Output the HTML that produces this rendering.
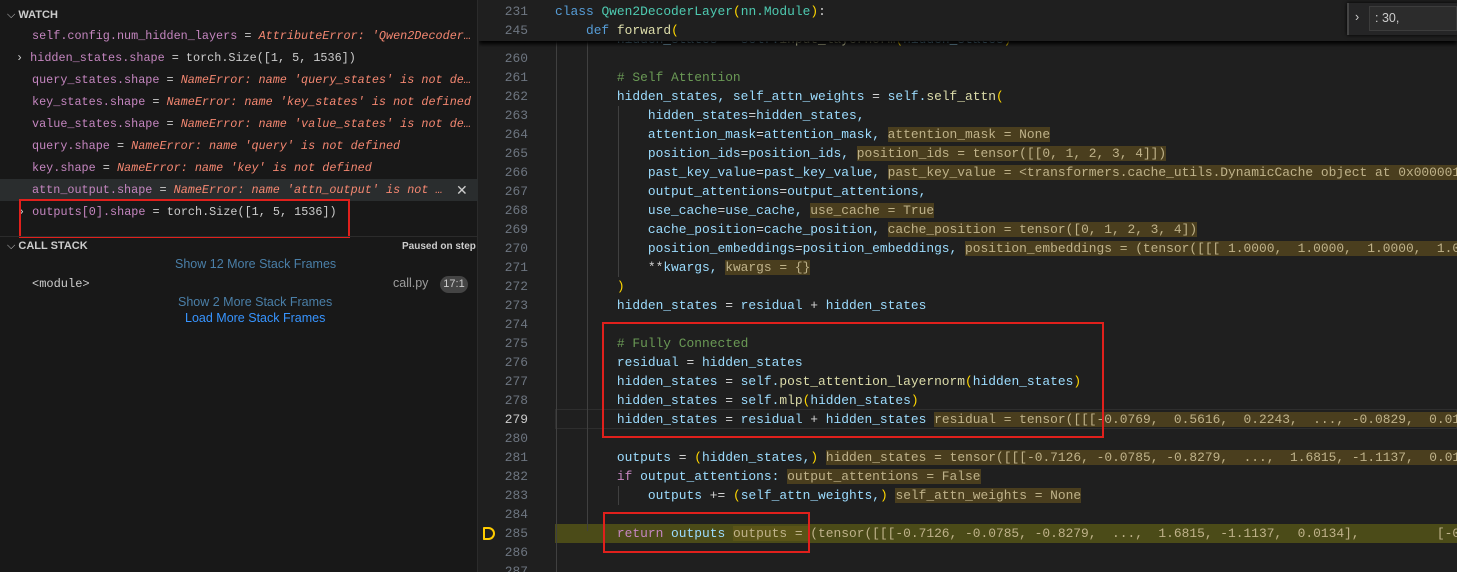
<!DOCTYPE html>
<html><head><meta charset="utf-8"><style>
*{margin:0;padding:0;box-sizing:border-box}
body{width:1457px;height:572px;overflow:hidden;background:#1f1f1f;position:relative;font-family:"Liberation Mono",monospace}
#side{position:absolute;left:0;top:0;width:478px;height:572px;background:#181818;border-right:1px solid #2b2b2b}
.r{position:absolute;left:32px;font-size:11.8px;white-space:nowrap;color:#cccccc;height:22px;line-height:22px}
.v{color:#c586c0}.e{color:#f48771;font-style:italic}.n{color:#cccccc}
.h{position:absolute;font-family:"Liberation Sans",sans-serif;font-weight:bold;font-size:11px;color:#cccccc}
.s{position:absolute;font-family:"Liberation Sans",sans-serif;font-size:12.5px;white-space:nowrap}
#ed{position:absolute;left:479px;top:0;width:978px;height:572px;overflow:hidden}
.l{position:absolute;left:76px;font-size:12.9px;white-space:pre;height:19px;line-height:19px;color:#9cdcfe}
.ln{position:absolute;left:0;width:49px;text-align:right;font-size:12.9px;color:#6e7681;height:19px;line-height:19px}
.k{color:#569cd6}.c{color:#4ec9b0}.f{color:#dcdcaa}.b{color:#ffd700}.cm{color:#6a9955}.p{color:#c586c0}.w{color:#d4d4d4}
.iv{background:#4a3e1e;color:#bfb28a}
.g{position:absolute;width:1px;background:#404040}
.box{position:absolute;border:2px solid #e0201c}
</style></head><body>
<div id="side">
<div class="h" style="left:7px;top:9px"><span style="font-weight:normal;color:#ccc">⌵</span> WATCH</div>
<div class="r" style="top:25px"><span class="v">self.config.num_hidden_layers</span> = <span class="e">AttributeError: 'Qwen2Decoder…</span></div>
<div class="r" style="top:47px;left:16px">›&nbsp;<span class="v">hidden_states.shape</span> = torch.Size([1, 5, 1536])</div>
<div class="r" style="top:69px"><span class="v">query_states.shape</span> = <span class="e">NameError: name 'query_states' is not de…</span></div>
<div class="r" style="top:91px"><span class="v">key_states.shape</span> = <span class="e">NameError: name 'key_states' is not defined</span></div>
<div class="r" style="top:113px"><span class="v">value_states.shape</span> = <span class="e">NameError: name 'value_states' is not de…</span></div>
<div class="r" style="top:135px"><span class="v">query.shape</span> = <span class="e">NameError: name 'query' is not defined</span></div>
<div class="r" style="top:157px"><span class="v">key.shape</span> = <span class="e">NameError: name 'key' is not defined</span></div>
<div style="position:absolute;left:0;top:179px;width:478px;height:22px;background:#2a2d2e"></div>
<div class="r" style="top:179px"><span class="v">attn_output.shape</span> = <span class="e">NameError: name 'attn_output' is not …</span></div>
<div class="s" style="left:456px;top:182px;color:#ccc;font-size:14px">✕</div>
<div class="r" style="top:201px;left:18px">›&nbsp;<span class="v">outputs[0].shape</span> = torch.Size([1, 5, 1536])</div>
<div class="box" style="left:19px;top:199px;width:331px;height:39px"></div>
<div style="position:absolute;left:0;top:236px;width:478px;height:1px;background:#2b2b2b"></div>
<div class="h" style="left:7px;top:240px"><span style="font-weight:normal">⌵</span> CALL STACK</div>
<div class="h" style="left:402px;top:241px;font-size:10px">Paused on step</div>
<div class="s" style="left:175px;top:257px;color:#4a7fa8">Show 12 More Stack Frames</div>
<div class="r" style="top:273px;font-size:12px">&lt;module&gt;</div>
<div class="s" style="left:393px;top:276px;color:#9d9d9d">call.py</div>
<div class="s" style="left:440px;top:276px;width:28px;height:17px;line-height:17px;border-radius:9px;background:#444;color:#ccc;font-size:11px;text-align:center">17:1</div>
<div class="s" style="left:178px;top:295px;color:#4a7fa8">Show 2 More Stack Frames</div>
<div class="s" style="left:185px;top:311px;color:#3794ff">Load More Stack Frames</div>
</div>

<div id="ed">
<div style="position:absolute;left:76px;top:524px;width:902px;height:19px;background:#4b4b18"></div>
<div style="position:absolute;left:76px;top:409px;width:902px;height:20px;border:1px solid #2e2e2e"></div>
<div class="g" style="left:77px;top:41px;height:531px"></div>
<div class="g" style="left:108px;top:41px;height:490px"></div>
<div class="g" style="left:139px;top:106px;height:171px"></div>
<div class="g" style="left:139px;top:486px;height:19px"></div>

<div class="l" style="top:30px">        hidden_states <span class="w">=</span> self.<span class="f">input_layernorm</span><span class="b">(</span>hidden_states<span class="b">)</span></div>
<div class="ln" style="top:49px">260</div>
<div class="ln" style="top:68px">261</div><div class="l" style="top:68px">        <span class="cm"># Self Attention</span></div>
<div class="ln" style="top:87px">262</div><div class="l" style="top:87px">        hidden_states, self_attn_weights <span class="w">=</span> self.<span class="f">self_attn</span><span class="b">(</span></div>
<div class="ln" style="top:106px">263</div><div class="l" style="top:106px">            hidden_states<span class="w">=</span>hidden_states,</div>
<div class="ln" style="top:125px">264</div><div class="l" style="top:125px">            attention_mask<span class="w">=</span>attention_mask, <span class="iv">attention_mask = None</span></div>
<div class="ln" style="top:144px">265</div><div class="l" style="top:144px">            position_ids<span class="w">=</span>position_ids, <span class="iv">position_ids = tensor([[0, 1, 2, 3, 4]])</span></div>
<div class="ln" style="top:163px">266</div><div class="l" style="top:163px">            past_key_value<span class="w">=</span>past_key_value, <span class="iv">past_key_value = &lt;transformers.cache_utils.DynamicCache object at 0x000001A2B3C4D5E6&gt;</span></div>
<div class="ln" style="top:182px">267</div><div class="l" style="top:182px">            output_attentions<span class="w">=</span>output_attentions,</div>
<div class="ln" style="top:201px">268</div><div class="l" style="top:201px">            use_cache<span class="w">=</span>use_cache, <span class="iv">use_cache = True</span></div>
<div class="ln" style="top:220px">269</div><div class="l" style="top:220px">            cache_position<span class="w">=</span>cache_position, <span class="iv">cache_position = tensor([0, 1, 2, 3, 4])</span></div>
<div class="ln" style="top:239px">270</div><div class="l" style="top:239px">            position_embeddings<span class="w">=</span>position_embeddings, <span class="iv">position_embeddings = (tensor([[[ 1.0000,  1.0000,  1.0000,  1.0000,  1.0000</span></div>
<div class="ln" style="top:258px">271</div><div class="l" style="top:258px">            <span class="w">**</span>kwargs, <span class="iv">kwargs = {}</span></div>
<div class="ln" style="top:277px">272</div><div class="l" style="top:277px">        <span class="b">)</span></div>
<div class="ln" style="top:296px">273</div><div class="l" style="top:296px">        hidden_states <span class="w">=</span> residual <span class="w">+</span> hidden_states</div>
<div class="ln" style="top:315px">274</div>
<div class="ln" style="top:334px">275</div><div class="l" style="top:334px">        <span class="cm"># Fully Connected</span></div>
<div class="ln" style="top:353px">276</div><div class="l" style="top:353px">        residual <span class="w">=</span> hidden_states</div>
<div class="ln" style="top:372px">277</div><div class="l" style="top:372px">        hidden_states <span class="w">=</span> self.<span class="f">post_attention_layernorm</span><span class="b">(</span>hidden_states<span class="b">)</span></div>
<div class="ln" style="top:391px">278</div><div class="l" style="top:391px">        hidden_states <span class="w">=</span> self.<span class="f">mlp</span><span class="b">(</span>hidden_states<span class="b">)</span></div>
<div class="ln" style="top:410px;color:#cccccc">279</div><div class="l" style="top:410px">        hidden_states <span class="w">=</span> residual <span class="w">+</span> hidden_states <span class="iv">residual = tensor([[[-0.0769,  0.5616,  0.2243,  ..., -0.0829,  0.0177,  0.1234</span></div>
<div class="ln" style="top:429px">280</div>
<div class="ln" style="top:448px">281</div><div class="l" style="top:448px">        outputs <span class="w">=</span> <span class="b">(</span>hidden_states,<span class="b">)</span> <span class="iv">hidden_states = tensor([[[-0.7126, -0.0785, -0.8279,  ...,  1.6815, -1.1137,  0.0134</span></div>
<div class="ln" style="top:467px">282</div><div class="l" style="top:467px">        <span class="p">if</span> output_attentions: <span class="iv">output_attentions = False</span></div>
<div class="ln" style="top:486px">283</div><div class="l" style="top:486px">            outputs <span class="w">+=</span> <span class="b">(</span>self_attn_weights,<span class="b">)</span> <span class="iv">self_attn_weights = None</span></div>
<div class="ln" style="top:505px">284</div>
<div class="ln" style="top:524px">285</div><div class="l" style="top:524px">        <span class="p">return</span> outputs <span style="background:#5a5418;color:#bfb28a">outputs = </span><span style="color:#bfb28a">(tensor([[[-0.7126, -0.0785, -0.8279,  ...,  1.6815, -1.1137,  0.0134],          [-0.1234</span></div>
<div class="ln" style="top:543px">286</div>
<div class="ln" style="top:562px">287</div>
<div style="position:absolute;left:4px;top:527px;width:12px;height:13px;border:2px solid #ffcc00;border-radius:1px 7px 7px 1px"></div>

<div style="position:absolute;left:0;top:0;width:978px;height:41px;background:#1f1f1f;box-shadow:0 3px 4px #000"></div>
<div class="ln" style="top:2px">231</div><div class="l" style="top:2px;color:#d4d4d4"><span class="k">class</span> <span class="c">Qwen2DecoderLayer</span><span class="b">(</span><span class="c">nn.Module</span><span class="b">)</span>:</div>
<div class="ln" style="top:21px">245</div><div class="l" style="top:21px">    <span class="k">def</span> <span class="f">forward</span><span class="b">(</span></div>
<div style="position:absolute;left:868px;top:3px;width:110px;height:32px;background:#252526;border-left:2px solid #444;box-shadow:0 0 4px #000"></div>
<div class="s" style="left:876px;top:10px;color:#ccc">›</div>
<div style="position:absolute;left:890px;top:6px;width:88px;height:25px;background:#2c2c2c;border:1px solid #3c3c3c;font-family:'Liberation Sans',sans-serif;font-size:12.5px;color:#ccc;line-height:23px;padding-left:5px">: 30,</div>
</div>
<div class="box" style="left:602px;top:322px;width:502px;height:116px"></div>
<div class="box" style="left:603px;top:512px;width:207px;height:41px"></div>
</body></html>
